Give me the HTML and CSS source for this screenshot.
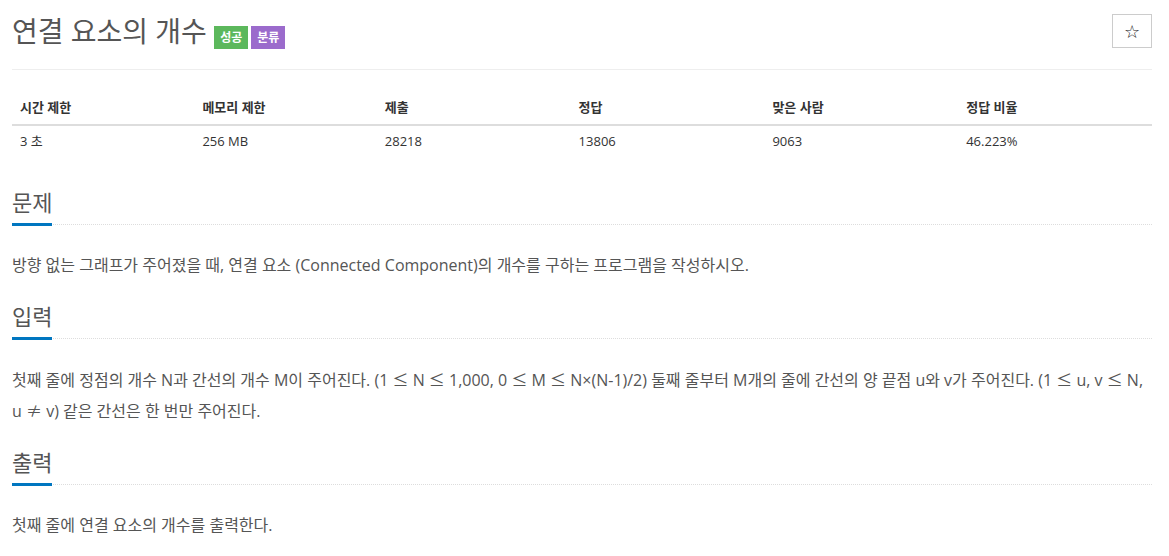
FILE: index.html
```html
<!DOCTYPE html>
<html lang="ko">
<head>
    <meta charset="UTF-8">
    <meta name="viewport" content="width=device-width, initial-scale=1.0">
    <title>연결 요소의 개수</title>
    <link rel="stylesheet" href="styles.css">
</head>
<body>
    <div class="container">
        <div class="page-header">
            <h1 class="problem-title">연결 요소의 개수 <span class="label label-success">성공</span><span class="label label-tag">분류</span></h1>
            <button type="button" class="btn-star">☆</button>
        </div>
        <table class="problem-info">
            <thead>
                <tr>
                    <th class="col-narrow">시간 제한</th>
                    <th class="col-narrow">메모리 제한</th>
                    <th>제출</th>
                    <th>정답</th>
                    <th>맞은 사람</th>
                    <th>정답 비율</th>
                </tr>
            </thead>
            <tbody>
                <tr>
                    <td>3 초</td>
                    <td>256 MB</td>
                    <td>28218</td>
                    <td>13806</td>
                    <td>9063</td>
                    <td>46.223%</td>
                </tr>
            </tbody>
        </table>
        <section class="problem-section">
            <div class="headline"><h2>문제</h2></div>
            <p>방향 없는 그래프가 주어졌을 때, 연결 요소 (Connected Component)의 개수를 구하는 프로그램을 작성하시오.</p>
        </section>
        <section class="problem-section">
            <div class="headline"><h2>입력</h2></div>
            <p>첫째 줄에 정점의 개수 N과 간선의 개수 M이 주어진다. (1 <span class="sym">≤</span> N <span class="sym">≤</span> 1,000, 0 <span class="sym">≤</span> M <span class="sym">≤</span> N×(N-1)/2) 둘째 줄부터 M개의 줄에 간선의 양 끝점 u와 v가 주어진다. (1 <span class="sym">≤</span> u, v <span class="sym">≤</span> N, u <span class="sym">≠</span> v) 같은 간선은 한 번만 주어진다.</p>
        </section>
        <section class="problem-section">
            <div class="headline"><h2>출력</h2></div>
            <p>첫째 줄에 연결 요소의 개수를 출력한다.</p>
        </section>
    </div>
</body>
</html>
```

FILE: styles.css
```css
body {
    margin: 0;
    font-family: "Open Sans", "Noto Sans CJK KR", sans-serif;
    color: #333;
    background: #fff;
}
.container {
    width: 1140px;
    padding: 0 12px;
}
.page-header {
    display: flex;
    justify-content: space-between;
    align-items: flex-start;
    padding: 14px 0 20px;
    border-bottom: 1px solid #eee;
}
.problem-title {
    margin: 0;
    font-size: 28px;
    line-height: 34px;
    font-weight: normal;
    color: #555;
}
.label {
    display: inline-block;
    padding: 0 6px;
    font-size: 12px;
    line-height: 23px;
    font-weight: bold;
    color: #fff;
}
.label-success {
    background: #5cb85c;
}
.label-tag {
    background: #9b6bcc;
    margin-left: 3px;
}
.btn-star {
    width: 40px;
    height: 34px;
    padding: 0;
    background: #fff;
    border: 1px solid #ccc;
    font-family: "DejaVu Sans", sans-serif;
    font-size: 18px;
    color: #222;
    cursor: pointer;
}
.problem-info {
    width: 100%;
    margin: 20px 0 29px;
    border-collapse: collapse;
    font-size: 13px;
    line-height: 18px;
    text-align: left;
}
.problem-info th {
    width: 17%;
    padding: 8px;
    border-bottom: 2px solid #ddd;
}
.problem-info th.col-narrow {
    width: 16%;
}
.problem-info td {
    padding: 6px 8px 8px;
}
.headline {
    border-bottom: 1px dotted #ddd;
    margin-bottom: 25px;
}
.headline h2 {
    display: inline-block;
    margin: 0 0 -2px;
    padding-bottom: 6px;
    font-size: 22px;
    line-height: 30px;
    font-weight: normal;
    color: #555;
    border-bottom: 3px solid #0076c0;
}
.problem-section {
    margin-bottom: 21px;
}
.problem-section p {
    margin: 0;
    font-size: 16px;
    line-height: 30px;
    color: #555;
}
.sym {
    font-family: "Noto Sans CJK KR", sans-serif;
}
```
